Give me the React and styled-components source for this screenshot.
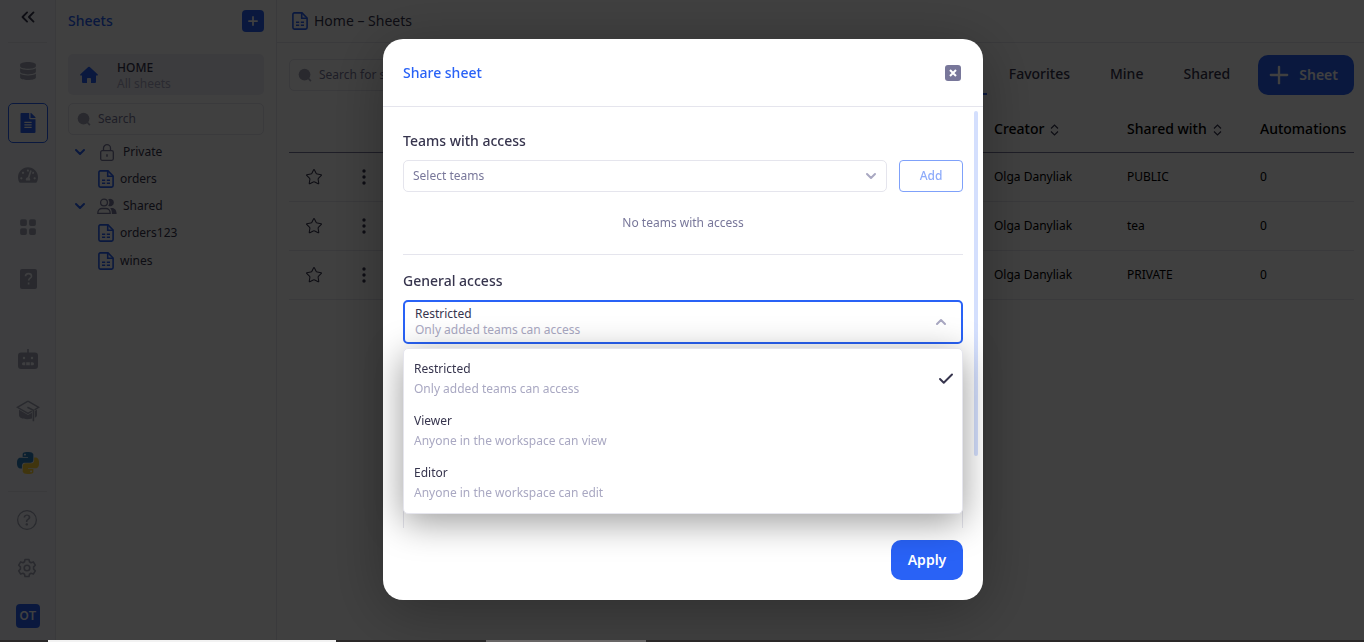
import React, { useState } from "react";
import styled, { createGlobalStyle, css } from "styled-components";
import { FaDatabase, FaFileAlt, FaTachometerAlt } from "react-icons/fa";
import { BsGridFill, BsQuestionCircle } from "react-icons/bs";
import {
  Check,
  ChevronDown,
  ChevronUp,
  ChevronsLeft,
  Plus,
  Star,
} from "lucide-react";

const colors = {
  accent: "#2962f6",
  text: "#36344d",
  muted: "#78779a",
  faint: "#a9a8c2",
  icon: "#a3a5b8",
  line: "#e5e5ed",
  rail: "#f5f8fd",
};

const GlobalStyle = createGlobalStyle`
  *, *::before, *::after { box-sizing: border-box; }
  html, body { margin: 0; height: 100%; overflow: hidden; }
  #root { height: 100%; }
  body, button, input, select {
    font-family: "Noto Sans", "Open Sans", sans-serif;
    font-size: 12px;
    line-height: 20px;
    color: ${colors.text};
  }
  button {
    margin: 0;
    padding: 0;
    border: 0;
    background: none;
    cursor: pointer;
  }
  a { color: inherit; text-decoration: none; }
  svg { display: block; flex: none; }
`;

//Shared styles
const headingText = css`
  font-size: 14px;
  font-weight: 500;
`;

const outlinedField = css`
  border: 1px solid ${colors.line};
  border-radius: 5px;
  background: #fff;
`;

//Page
const Page = styled.div`
  display: flex;
  flex-direction: column;
  height: 100vh;
`;

const Workspace = styled.div`
  display: flex;
  flex: 1;
  min-height: 0;
  background: #fff;
`;

//Rail
const Rail = styled.nav`
  display: flex;
  flex-direction: column;
  align-items: flex-start;
  width: 56px;
  padding: 0 7px 12px 8px;
  border-right: 1px solid ${colors.line};
  background: ${colors.rail};
`;

const RailGroup = styled.div`
  display: flex;
  flex-direction: column;
  gap: ${({ $gap }) => $gap || "12px"};
  margin-top: ${({ $top }) => $top || "0"};
`;

const BottomGroup = styled(RailGroup)`
  width: 39px;
  padding-top: 16px;
  border-top: 1px solid ${colors.line};
`;

const RailDivider = styled.hr`
  width: 39px;
  height: 1px;
  margin: 0;
  border: 0;
  background: ${colors.line};
`;

const CollapseButton = styled.button`
  display: flex;
  align-items: center;
  justify-content: center;
  width: 40px;
  height: 34px;
  margin-bottom: 8px;
`;

const RailLink = styled.a`
  display: flex;
  align-items: center;
  justify-content: center;
  width: 40px;
  height: 40px;
  border: 1px solid ${({ $active }) => ($active ? colors.accent : "transparent")};
  border-radius: 5px;
  background: ${({ $active }) => ($active ? "#fff" : "transparent")};
  color: ${({ $active }) => ($active ? colors.accent : colors.icon)};
`;

const SmallRailLink = styled(RailLink)`
  width: 38px;
  height: 24px;
`;

const Avatar = styled.button`
  width: 24px;
  height: 24px;
  margin-left: 8px;
  border-radius: 4px;
  background: ${colors.accent};
  color: #fff;
  font-family: Inter, sans-serif;
  font-weight: 600;
`;

//Sidebar
const Sidebar = styled.aside`
  width: 221px;
  padding: 0 12px;
  border-right: 1px solid ${colors.line};
`;

const SidebarHeader = styled.div`
  display: flex;
  align-items: center;
  justify-content: space-between;
  height: 42px;
  margin-bottom: 12px;
`;

const SidebarTitle = styled.h2`
  margin: 0;
  color: ${colors.accent};
  ${headingText}
`;

const AddButton = styled.button`
  display: flex;
  align-items: center;
  justify-content: center;
  width: 22px;
  height: 22px;
  border-radius: 4px;
  background: ${colors.accent};
  color: #fff;
`;

const HomeCard = styled.a`
  display: flex;
  align-items: center;
  gap: 18px;
  height: 41px;
  margin-bottom: 8px;
  padding: 0 11px;
  border-radius: 5px;
  background: #efeff5;
`;

const HomeText = styled.span`
  display: flex;
  flex-direction: column;
  padding-top: 3px;
  font-weight: 500;
  line-height: 16px;
`;

const HomeHint = styled.span`
  color: ${colors.faint};
  font-weight: 400;
`;

const SearchBox = styled.label`
  display: flex;
  align-items: center;
  gap: 7px;
  width: ${({ $width }) => $width || "auto"};
  height: 32px;
  padding: 0 8px;
  color: ${colors.icon};
  ${outlinedField}
`;

const SearchInput = styled.input`
  flex: 1;
  min-width: 0;
  padding: 0;
  border: 0;
  outline: 0;
  background: transparent;

  &::placeholder {
    color: ${colors.muted};
    opacity: 1;
  }
`;

const Tree = styled.div`
  padding-top: 4px;
`;

const TreeGroup = styled.button`
  display: flex;
  align-items: center;
  width: 100%;
  height: 26px;
  padding-left: 4px;
  text-align: left;
`;

const TreeIcon = styled.span`
  display: flex;
  justify-content: center;
  width: 20px;
  margin: 0 6px 0 9px;
  color: ${colors.muted};
`;

const Caret = styled.span`
  color: ${colors.accent};
`;

const TreeItem = styled.a`
  display: flex;
  align-items: center;
  gap: 6px;
  height: 28px;
  padding-left: 30px;
`;

//Main area
const Main = styled.main`
  flex: 1;
  min-width: 0;
`;

const Breadcrumb = styled.header`
  display: flex;
  align-items: center;
  gap: 6px;
  height: 43px;
  padding: 0 15px;
  border-bottom: 1px solid ${colors.line};
  font-size: 14px;
`;

const Content = styled.div`
  padding: 12px 10px 0 12px;
`;

const Toolbar = styled.div`
  display: flex;
  align-items: center;
  justify-content: space-between;
  height: 40px;
`;

const ToolbarActions = styled.div`
  display: flex;
  align-items: center;
  gap: 10px;
`;

const Tabs = styled.div`
  display: flex;
  gap: 4px;
`;

const Tab = styled.button`
  height: 40px;
  padding: 0 18px;
  border-bottom: 2px solid
    ${({ $active }) => ($active ? colors.accent : "transparent")};
  color: ${({ $active }) => ($active ? colors.accent : colors.text)};
  ${headingText}
`;

const PrimaryButton = styled.button`
  min-width: 72px;
  height: 40px;
  padding: 0 16px;
  border-radius: 10px;
  background: ${colors.accent};
  color: #fff;
  font-size: 14px;
  font-weight: 600;
`;

const NewSheetButton = styled(PrimaryButton)`
  display: flex;
  align-items: center;
  gap: 6px;
  padding: 0 16px 0 7px;
`;

const Table = styled.table`
  width: 100%;
  margin-top: 10px;
  border-collapse: collapse;
  table-layout: fixed;
  color: #000;
`;

const HeadCell = styled.th`
  width: ${({ $width }) => $width || "auto"};
  height: 47px;
  padding: 2px 0 0;
  border-bottom: 1px solid ${colors.muted};
  text-align: left;
  white-space: nowrap;
  ${headingText}
`;

const HeadLabel = styled.span`
  display: inline-flex;
  align-items: center;
  gap: 6px;
`;

const Cell = styled.td`
  height: 49px;
  padding: 0;
  border-bottom: 1px solid ${colors.line};
`;

const CellButton = styled.button`
  display: flex;
  align-items: center;
  justify-content: center;
  width: 50px;
  height: 24px;
`;

//Modal
const Overlay = styled.div`
  position: fixed;
  inset: 0;
  display: flex;
  justify-content: center;
  padding: 39px 20px 42px 22px;
  background: rgba(0, 0, 0, 0.75);
`;

const Dialog = styled.section`
  display: flex;
  flex-direction: column;
  width: 100%;
  max-width: 600px;
  border-radius: 20px;
  background: #fff;
  box-shadow: 0 10px 60px rgba(0, 0, 0, 0.3);
`;

const DialogHeader = styled.header`
  display: flex;
  align-items: center;
  justify-content: space-between;
  height: 68px;
  padding: 0 22px 0 20px;
  border-bottom: 1px solid ${colors.line};
`;

const DialogTitle = styled.h1`
  margin: 0;
  color: ${colors.accent};
  ${headingText}
`;

const CloseButton = styled.button`
  display: flex;
  align-items: center;
  justify-content: center;
  width: 16px;
  height: 16px;
  border-radius: 3px;
  background: ${colors.muted};
  color: #fff;
`;

const DialogBody = styled.div`
  position: relative;
  display: flex;
  flex: 1;
  flex-direction: column;
  min-height: 0;
  padding: 24px 20px 0;
`;

const ScrollThumb = styled.div`
  position: absolute;
  top: 4px;
  right: 5px;
  width: 4px;
  height: 82%;
  border-radius: 2px;
  background: #d4dffd;
`;

const FieldLabel = styled.label`
  margin-bottom: 10px;
  line-height: 19px;
  ${headingText}
`;

const TeamRow = styled.div`
  display: flex;
  gap: 12px;
`;

const SelectWrap = styled.div`
  display: grid;
  flex: 1;
  align-items: center;
  color: ${colors.faint};

  > * {
    grid-area: 1 / 1;
  }
  > svg {
    justify-self: end;
    margin-right: 8px;
    pointer-events: none;
  }
`;

const TeamSelect = styled.select`
  appearance: none;
  width: 100%;
  height: 32px;
  padding: 0 9px;
  color: ${colors.muted};
  ${outlinedField}
`;

const OutlinedButton = styled.button`
  width: 64px;
  height: 32px;
  border: 1px solid #7fa1fa;
  border-radius: 4px;
  color: #8eacfa;
  font-weight: 500;
`;

const EmptyNote = styled.p`
  display: flex;
  align-items: center;
  justify-content: center;
  height: 63px;
  margin: 0 0 16px;
  border-bottom: 1px solid ${colors.line};
  color: ${colors.muted};
`;

const AccessField = styled.div`
  position: relative;
`;

const AccessButton = styled.button`
  display: flex;
  align-items: center;
  justify-content: space-between;
  width: 100%;
  height: 44px;
  padding: 0 12px 0 10px;
  border: 2px solid ${colors.accent};
  border-radius: 5px;
  background: #fff;
  color: ${colors.faint};
  text-align: left;
  line-height: 16px;
`;

const OptionText = styled.span`
  display: flex;
  flex-direction: column;
  color: ${colors.faint};
`;

const OptionName = styled.span`
  color: ${colors.text};
`;

const Menu = styled.ul`
  position: absolute;
  z-index: 1;
  top: 100%;
  left: 0;
  right: 0;
  margin: 4px 0 0;
  padding: 4px 0;
  border: 1px solid ${colors.line};
  border-radius: 5px;
  background: #fff;
  box-shadow: 0 8px 36px rgba(0, 0, 0, 0.4);
  list-style: none;
`;

const MenuItem = styled.li`
  display: flex;
  align-items: center;
  justify-content: space-between;
  height: 52px;
  padding: 0 7px 0 10px;
  cursor: pointer;
`;

const ListClip = styled.div`
  flex: 1;
  min-height: 0;
  margin-top: 16px;
  overflow: hidden;
`;

const AccessList = styled.div`
  height: 240px;
  ${outlinedField}
`;

const DialogFooter = styled.footer`
  display: flex;
  justify-content: flex-end;
  padding: 12px 20px 20px;
`;

//Bottom strip
const Strip = styled.div`
  position: relative;
  z-index: 2;
  display: grid;
  grid-template-columns: 48px 288px 150px 160px 1fr;
  height: 2px;
  background: #2a2828;
`;

const StripPart = styled.span`
  background: ${({ $color }) => $color};
`;

//Icons
const SheetIcon = () => (
  <svg
    width="16"
    height="18"
    viewBox="0 0 16 18"
    fill="none"
    stroke={colors.accent}
    strokeWidth="1.6"
  >
    <path d="M2.400.9H10L15.100 6v9.600c0 .9-.6 1.500-1.500 1.500H2.400c-.9 0-1.500-.6-1.500-1.500V2.400C.9 1.500 1.500.9 2.400.9Z" />
    <path d="M9.700 1v5.300H15" />
    <path d="M4 10.300h3.200M8.800 10.300H12M4 13.300h3.200M8.800 13.300H12" />
  </svg>
);

const HomeIcon = () => (
  <svg width="20" height="18" viewBox="0 0 20 18" fill={colors.accent}>
    <path d="M9.200 1a1.300 1.300 0 0 1 1.600 0l7.800 7.200c.6.600.3 1.300-.5 1.300H17v6.300c0 .8-.5 1.200-1.200 1.200H12v-4.200c0-.6-.3-.9-.9-.9H8.900c-.6 0-.9.3-.9.900V17H4.200c-.7 0-1.200-.4-1.200-1.200V9.500H1.900c-.8 0-1.100-.7-.5-1.300Z" />
  </svg>
);

const SearchIcon = () => (
  <svg width="14" height="14" viewBox="0 0 15 15">
    <circle cx="7" cy="7" r="6.300" fill="currentColor" />
    <path d="m11 11 2.800 3" stroke="currentColor" strokeWidth="1.800" />
  </svg>
);

const LockIcon = () => (
  <svg
    width="14"
    height="17"
    viewBox="0 0 14 17"
    fill="none"
    stroke="currentColor"
    strokeWidth="1.300"
  >
    <rect x=".7" y="6.700" width="12.600" height="9.600" rx="1.500" />
    <path d="M3.500 6.700V4.200a3.500 3.500 0 0 1 7 0v2.500" />
    <path d="M7 10.300v2.400" strokeWidth="1.500" />
  </svg>
);

const PeopleIcon = () => (
  <svg width="20" height="17" viewBox="0 0 20 17" fill="currentColor">
    <circle cx="7" cy="4.500" r="3.400" fill="none" stroke="currentColor" strokeWidth="1.300" />
    <path d="M.8 15.300c0-3 2-4.800 4.200-4.800h4c2.200 0 4.200 1.800 4.200 4.800Z" fill="none" stroke="currentColor" strokeWidth="1.300" />
    <path d="M11.200 1.200a3.800 3.800 0 1 1 0 6.600 5.600 5.600 0 0 0 0-6.600ZM13.200 10h1.900c2.600 0 4.500 2.200 4.500 6h-4.700c0-2.600-.5-4.600-1.700-6Z" />
  </svg>
);

const HelpFileIcon = () => (
  <svg width="17" height="20" viewBox="0 0 17 20">
    <rect width="17" height="20" rx="2" fill="currentColor" />
    <path
      d="M5.500 7.300c0-1.700 1.300-2.700 3-2.700s3 1 3 2.600c0 2-2.800 2.100-2.800 4.300M8.600 13.500v2"
      fill="none"
      stroke={colors.rail}
      strokeWidth="1.600"
    />
  </svg>
);

const RobotIcon = () => (
  <svg width="20" height="20" viewBox="0 0 20 20">
    <path d="M9.200 0h1.600v3.400H17A3 3 0 0 1 20 6.400V17a3 3 0 0 1-3 3H3a3 3 0 0 1-3-3V6.400a3 3 0 0 1 3-3h6.200Z" fill="currentColor" />
    <g fill={colors.rail}>
      <circle cx="6" cy="9" r="1.200" />
      <circle cx="14" cy="9" r="1.200" />
      <path d="M5.500 13.200h1.700v3H5.500a1.500 1.500 0 0 1 0-3ZM8.200 13.200h3.600v3H8.200ZM12.800 13.200h1.700a1.500 1.500 0 0 1 0 3h-1.700Z" />
    </g>
  </svg>
);

const CapIcon = () => (
  <svg width="24" height="22" viewBox="0 0 24 22">
    <path
      d="M12 1.200 22.600 7.300 18.500 9.800M12 1.200 1.400 7.300 12 13.400l3.800-2.200"
      fill="none"
      stroke="currentColor"
      strokeWidth="1.500"
    />
    <path d="m11.400 7.300 6 3v11" fill="none" stroke="currentColor" strokeWidth="1.600" />
    <path
      d="M3 9.800 12 15l4-2.300v5.700c-3.400 1.200-8 1-10.900-.4C3.700 17.300 3 16.400 3 15.300ZM18.800 11 21 9.800v5.500c0 1-.8 1.900-2.200 2.500Z"
      fill="currentColor"
    />
  </svg>
);

const PythonIcon = () => (
  <svg width="22" height="22" viewBox="0 0 24 24">
    <path
      fill="#2f7fc0"
      d="M14.250.18l.9.200.730.260.590.300.450.320.340.340.250.340.160.330.100.300.040.260.020.200-.010.130V8.500l-.050.630-.130.550-.210.460-.260.380-.300.310-.330.250-.350.190-.350.140-.330.100-.300.070-.260.040-.210.020H8.770l-.690.050-.590.140-.500.220-.410.270-.330.320-.270.350-.200.360-.150.370-.100.350-.070.320-.040.270-.020.210v3.060H3.170l-.210-.030-.280-.070-.320-.120-.350-.180-.360-.260-.360-.360-.350-.460-.320-.590-.280-.730-.210-.880-.140-1.050-.050-1.230.060-1.220.160-1.040.240-.870.320-.710.360-.570.400-.440.420-.330.420-.240.400-.160.360-.100.320-.050.240-.010h.160l.060.010h8.160v-.830H6.180l-.010-2.750-.020-.370.050-.340.110-.310.170-.280.250-.260.310-.230.380-.200.440-.180.510-.150.580-.120.640-.100.710-.060.770-.040.840-.020 1.270.050zm-6.300 1.980l-.230.330-.080.410.080.410.230.340.330.220.410.090.410-.090.330-.220.230-.340.080-.410-.080-.410-.230-.330-.330-.220-.410-.090-.410.090z"
    />
    <path
      fill="#ffd43b"
      d="M21.100 6.110l.280.060.320.120.350.180.360.270.360.350.350.470.320.590.280.730.210.880.140 1.040.050 1.230-.060 1.230-.160 1.040-.240.860-.320.710-.360.570-.400.450-.420.330-.420.240-.400.160-.360.090-.320.050-.240.020-.160-.010h-8.220v.820h5.840l.010 2.760.020.360-.050.340-.110.310-.170.290-.250.250-.310.240-.380.200-.440.170-.510.150-.580.130-.640.090-.710.070-.770.040-.840.010-1.270-.040-1.070-.140-.900-.200-.730-.250-.590-.300-.450-.330-.340-.340-.250-.340-.160-.330-.100-.300-.040-.250-.020-.200.010-.130v-5.340l.050-.640.130-.540.210-.460.260-.380.300-.320.330-.240.350-.200.350-.140.330-.100.300-.060.260-.040.210-.020.130-.010h5.840l.690-.050.590-.140.500-.210.410-.280.330-.320.270-.350.200-.360.150-.360.100-.350.070-.320.040-.280.020-.210V6.070h2.090l.140.010zm-6.470 14.250l-.230.330-.080.410.080.410.230.330.330.230.410.080.410-.080.330-.230.230-.330.080-.410-.080-.410-.230-.330-.330-.230-.410-.080-.410.080z"
    />
  </svg>
);

const GearIcon = () => (
  <svg
    width="20"
    height="20"
    viewBox="0 0 20 20"
    fill="none"
    stroke="currentColor"
    strokeWidth="1.600"
    strokeLinejoin="round"
  >
    <path d="M8 1.500h4l.5 2.300 1.500.9 2.300-.8 2 3.300-1.700 1.700v2.200l1.700 1.700-2 3.300-2.300-.8-1.500.9-.5 2.300H8l-.5-2.300-1.500-.9-2.300.8-2-3.300 1.700-1.700V8.900L1.700 7.200l2-3.300 2.300.8 1.500-.9Z" />
    <circle cx="10" cy="10" r="2.800" />
  </svg>
);

const SortIcon = () => (
  <svg
    width="9"
    height="14"
    viewBox="0 0 9 14"
    fill="none"
    stroke={colors.text}
    strokeWidth="1.200"
  >
    <path d="M1 6.500 4.500 3 8 6.500M1 9.500 4.500 13 8 9.500" />
  </svg>
);

const DotsIcon = () => (
  <svg width="4" height="16" viewBox="0 0 4 16" fill={colors.text}>
    <circle cx="2" cy="2" r="1.700" />
    <circle cx="2" cy="8" r="1.700" />
    <circle cx="2" cy="14" r="1.700" />
  </svg>
);

const CrossIcon = () => (
  <svg width="8" height="8" viewBox="0 0 8 8" stroke="currentColor" strokeWidth="2">
    <path d="m1 1 6 6M7 1 1 7" />
  </svg>
);

//Data
const tree = [
  { name: "Private", icon: <LockIcon />, sheets: ["orders"] },
  { name: "Shared", icon: <PeopleIcon />, sheets: ["orders123", "wines"] },
];

const rows = [
  { id: 1, creator: "Olga Danyliak", shared: "PUBLIC", automations: 0 },
  { id: 2, creator: "Olga Danyliak", shared: "tea", automations: 0 },
  { id: 3, creator: "Olga Danyliak", shared: "PRIVATE", automations: 0 },
];

const accessOptions = [
  { name: "Restricted", hint: "Only added teams can access" },
  { name: "Viewer", hint: "Anyone in the workspace can view" },
  { name: "Editor", hint: "Anyone in the workspace can edit" },
];

const RailNav = () => (
  <Rail>
    <CollapseButton aria-label="Collapse">
      <ChevronsLeft size={22} strokeWidth={2} />
    </CollapseButton>
    <RailDivider />
    <RailGroup $top="8px">
      <RailLink href="#data" aria-label="Data">
        <FaDatabase size={18} />
      </RailLink>
      <RailLink href="#sheets" aria-label="Sheets" $active>
        <FaFileAlt size={20} />
      </RailLink>
      <RailLink href="#dashboards" aria-label="Dashboards">
        <FaTachometerAlt size={20} />
      </RailLink>
      <RailLink href="#apps" aria-label="Apps">
        <BsGridFill size={18} />
      </RailLink>
      <RailLink href="#requests" aria-label="Requests">
        <HelpFileIcon />
      </RailLink>
    </RailGroup>
    <RailGroup $top="40px">
      <RailLink href="#assistant" aria-label="Assistant">
        <RobotIcon />
      </RailLink>
      <RailLink href="#learn" aria-label="Learn">
        <CapIcon />
      </RailLink>
      <RailLink href="#python" aria-label="Python">
        <PythonIcon />
      </RailLink>
    </RailGroup>
    <BottomGroup $top="auto" $gap="24px">
      <SmallRailLink href="#help" aria-label="Help">
        <BsQuestionCircle size={20} />
      </SmallRailLink>
      <SmallRailLink href="#settings" aria-label="Settings">
        <GearIcon />
      </SmallRailLink>
      <Avatar>OT</Avatar>
    </BottomGroup>
  </Rail>
);

const SheetsSidebar = () => (
  <Sidebar>
    <SidebarHeader>
      <SidebarTitle>Sheets</SidebarTitle>
      <AddButton aria-label="Add sheet">
        <Plus size={14} strokeWidth={3} />
      </AddButton>
    </SidebarHeader>
    <HomeCard href="#home">
      <HomeIcon />
      <HomeText>
        HOME
        <HomeHint>All sheets</HomeHint>
      </HomeText>
    </HomeCard>
    <SearchBox>
      <SearchIcon />
      <SearchInput aria-label="Search" placeholder="Search" />
    </SearchBox>
    <Tree>
      {tree.map(({ name, icon, sheets }) => (
        <div key={name}>
          <TreeGroup>
            <Caret>
              <ChevronDown size={16} strokeWidth={3} />
            </Caret>
            <TreeIcon>{icon}</TreeIcon>
            {name}
          </TreeGroup>
          {sheets.map((sheet) => (
            <TreeItem key={sheet} href={`#${sheet}`}>
              <SheetIcon />
              {sheet}
            </TreeItem>
          ))}
        </div>
      ))}
    </Tree>
  </Sidebar>
);

const SheetsTable = () => (
  <Table>
    <thead>
      <tr>
        <HeadCell $width="50px" />
        <HeadCell $width="50px" />
        <HeadCell />
        <HeadCell $width="133px">
          <HeadLabel>
            Creator <SortIcon />
          </HeadLabel>
        </HeadCell>
        <HeadCell $width="133px">
          <HeadLabel>
            Shared with <SortIcon />
          </HeadLabel>
        </HeadCell>
        <HeadCell $width="94px">Automations</HeadCell>
      </tr>
    </thead>
    <tbody>
      {rows.map(({ id, creator, shared, automations }) => (
        <tr key={id}>
          <Cell>
            <CellButton aria-label="Favorite">
              <Star size={18} strokeWidth={1.4} />
            </CellButton>
          </Cell>
          <Cell>
            <CellButton aria-label="More">
              <DotsIcon />
            </CellButton>
          </Cell>
          <Cell />
          <Cell>{creator}</Cell>
          <Cell>{shared}</Cell>
          <Cell>{automations}</Cell>
        </tr>
      ))}
    </tbody>
  </Table>
);

const ShareDialog = () => {
  const [access, setAccess] = useState(accessOptions[0]);
  const [open, setOpen] = useState(true);

  return (
    <Overlay>
      <Dialog role="dialog" aria-labelledby="share-title">
        <DialogHeader>
          <DialogTitle id="share-title">Share sheet</DialogTitle>
          <CloseButton aria-label="Close">
            <CrossIcon />
          </CloseButton>
        </DialogHeader>
        <DialogBody>
          <ScrollThumb />
          <FieldLabel htmlFor="teams">Teams with access</FieldLabel>
          <TeamRow>
            <SelectWrap>
              <TeamSelect id="teams">
                <option>Select teams</option>
              </TeamSelect>
              <ChevronDown size={16} strokeWidth={3} />
            </SelectWrap>
            <OutlinedButton>Add</OutlinedButton>
          </TeamRow>
          <EmptyNote>No teams with access</EmptyNote>
          <FieldLabel htmlFor="access">General access</FieldLabel>
          <AccessField>
            <AccessButton
              id="access"
              aria-haspopup="listbox"
              aria-expanded={open}
              onClick={() => setOpen(!open)}
            >
              <OptionText>
                <OptionName>{access.name}</OptionName>
                {access.hint}
              </OptionText>
              <ChevronUp size={16} strokeWidth={3} />
            </AccessButton>
            {open && (
              <Menu role="listbox">
                {accessOptions.map((option) => (
                  <MenuItem
                    key={option.name}
                    role="option"
                    aria-selected={option === access}
                    onClick={() => setAccess(option)}
                  >
                    <OptionText>
                      <OptionName>{option.name}</OptionName>
                      {option.hint}
                    </OptionText>
                    {option === access && <Check size={18} strokeWidth={2.6} />}
                  </MenuItem>
                ))}
              </Menu>
            )}
          </AccessField>
          <ListClip>
            <AccessList />
          </ListClip>
        </DialogBody>
        <DialogFooter>
          <PrimaryButton>Apply</PrimaryButton>
        </DialogFooter>
      </Dialog>
    </Overlay>
  );
};

const App = () => (
  <Page>
    <GlobalStyle />
    <Workspace>
      <RailNav />
      <SheetsSidebar />
      <Main>
        <Breadcrumb>
          <SheetIcon />
          Home – Sheets
        </Breadcrumb>
        <Content>
          <Toolbar>
            <SearchBox $width="240px">
              <SearchIcon />
              <SearchInput aria-label="Search for sheets" placeholder="Search for sheets" />
            </SearchBox>
            <ToolbarActions>
              <Tabs>
                <Tab $active>All</Tab>
                <Tab>Favorites</Tab>
                <Tab>Mine</Tab>
                <Tab>Shared</Tab>
              </Tabs>
              <NewSheetButton>
                <Plus size={28} strokeWidth={2} />
                Sheet
              </NewSheetButton>
            </ToolbarActions>
          </Toolbar>
          <SheetsTable />
        </Content>
      </Main>
    </Workspace>
    <ShareDialog />
    <Strip>
      <StripPart />
      <StripPart $color="#f2f2f2" />
      <StripPart />
      <StripPart $color="#686666" />
      <StripPart />
    </Strip>
  </Page>
);

export default App;
